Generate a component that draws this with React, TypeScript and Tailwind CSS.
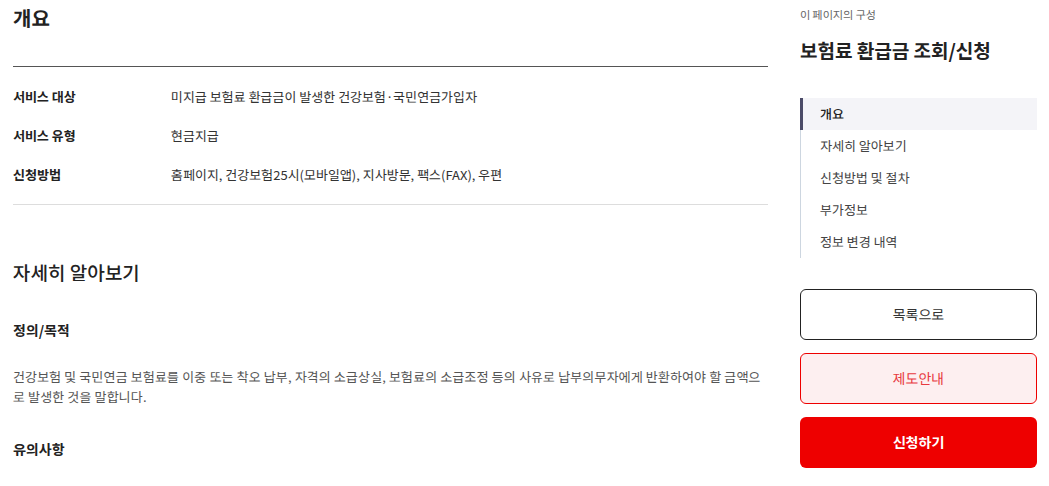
import React from 'react';

const rows = [
  { label: '서비스 대상', value: '미지급 보험료 환급금이 발생한 건강보험·국민연금가입자' },
  { label: '서비스 유형', value: '현금지급' },
  { label: '신청방법', value: '홈페이지, 건강보험25시(모바일앱), 지사방문, 팩스(FAX), 우편' },
];

const navItems = ['개요', '자세히 알아보기', '신청방법 및 절차', '부가정보', '정보 변경 내역'];

const App: React.FC = () => {
  return (
    <div
      className="flex w-[1049px] h-[486px] overflow-hidden bg-white text-[#222]"
      style={{ fontFamily: '"Noto Sans KR", "Noto Sans CJK KR", "Noto Sans", sans-serif' }}
    >
      <main className="w-[755px] ml-[13px] shrink-0">
        <h2 className="text-[20px] font-bold leading-[28px] mt-[4px]">개요</h2>
        <div className="mt-[34px] border-t border-[#555]" />
        <dl className="pt-[10px] pb-[10px]">
          {rows.map((r) => (
            <div key={r.label} className="flex items-center h-[39px] text-[13px]">
              <dt className="w-[158px] shrink-0 font-bold text-[#222]">{r.label}</dt>
              <dd className="text-[#333]">{r.value}</dd>
            </div>
          ))}
        </dl>
        <div className="border-t border-[#ddd]" />

        <h3 className="mt-[53px] text-[19px] font-medium leading-[28px]">자세히 알아보기</h3>
        <h4 className="mt-[34px] text-[14px] font-bold leading-[20px]">정의/목적</h4>
        <p className="mt-[27px] text-[13px] leading-[20px] tracking-[0.12px] text-[#555]">
          건강보험 및 국민연금 보험료를 이중 또는 착오 납부, 자격의 소급상실, 보험료의 소급조정 등의 사유로 납부의무자에게 반환하여야 할 금액으로 발생한 것을 말합니다.
        </p>
        <h4 className="mt-[32px] text-[14px] font-bold leading-[20px]">유의사항</h4>
      </main>

      <aside className="w-[237px] ml-[32px] shrink-0">
        <p className="mt-[6px] text-[11px] leading-[16px] text-[#666]">이 페이지의 구성</p>
        <h2 className="mt-[15px] text-[19px] font-bold leading-[26px] text-[#222]">보험료 환급금 조회/신청</h2>
        <nav className="mt-[35px] border-l border-[#cdd6e0]">
          {navItems.map((item, i) => (
            <div
              key={item}
              className={
                i === 0
                  ? 'h-[32px] flex items-center pl-[17px] -ml-px border-l-[3px] border-[#4b4b68] bg-[#f4f4f8] text-[13px] font-medium text-[#222]'
                  : 'h-[32px] flex items-center pl-[19px] text-[13px] text-[#444]'
              }
            >
              {item}
            </div>
          ))}
        </nav>
        <div className="mt-[31px] flex flex-col gap-[13px]">
          <button className="h-[51px] rounded-[6px] border border-[#222] bg-white text-[14px] text-[#333]">
            목록으로
          </button>
          <button className="h-[51px] rounded-[6px] border border-[#ee0000] bg-[#fdeff0] text-[14px] text-[#e8393f]">
            제도안내
          </button>
          <button className="h-[51px] rounded-[6px] bg-[#ee0000] text-[14px] font-bold text-white">
            신청하기
          </button>
        </div>
      </aside>
    </div>
  );
};

export default App;
